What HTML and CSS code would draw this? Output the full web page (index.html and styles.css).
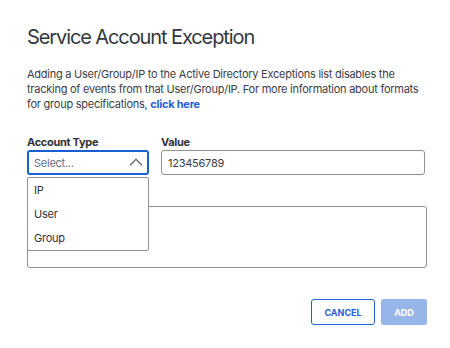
FILE: index.html
```html
<!DOCTYPE html>
<html lang="en">
<head>
  <meta charset="UTF-8">
  <title>Service Account Exception</title>
  <link rel="stylesheet" href="styles.css">
</head>
<body>
  <div class="dialog">
    <h2 class="title">Service Account Exception</h2>
    <p class="intro">
      Adding a User/Group/IP to the Active Directory Exceptions list disables the
      tracking of events from that User/Group/IP. For more information about formats
      for group specifications, <a href="#">click here</a>
    </p>

    <div class="row">
      <div class="field type-field">
        <label>Account Type</label>
        <div class="select">
          <span class="placeholder">Select...</span>
          <svg class="chevron" width="14" height="8" viewBox="0 0 14 8">
            <path d="M1 7.2 L7 1.3 L13 7.2" fill="none" stroke="#5a5f66" stroke-width="1.2"/>
          </svg>
        </div>
        <ul class="menu">
          <li>IP</li>
          <li>User</li>
          <li>Group</li>
        </ul>
      </div>
      <div class="field value-field">
        <label>Value</label>
        <input class="input" type="text" value="123456789">
      </div>
    </div>

    <div class="comment-field">
      <textarea class="textarea" aria-label="Comment"></textarea>
    </div>

    <div class="actions">
      <button class="btn btn-outline">Cancel</button>
      <button class="btn btn-primary" disabled>Add</button>
    </div>
  </div>
</body>
</html>
```

FILE: styles.css
```css
body {
  margin: 0;
  font-family: 'Inter', 'Liberation Sans', sans-serif;
  background-color: #ffffff;
  color: #3a3e44;
}
.dialog {
  width: 400px;
  padding: 25px 23px 0 27px;
}
.title {
  margin: 0;
  font-size: 20px;
  line-height: 24px;
  font-weight: 400;
  letter-spacing: -1.1px;
  color: #33383e;
}
.intro {
  margin: 18px 0 0;
  font-size: 11px;
  line-height: 15px;
  letter-spacing: -0.25px;
  color: #3b4046;
}
.intro a {
  color: #1f63d6;
  font-weight: 700;
  text-decoration: none;
}
.row {
  display: flex;
  gap: 12px;
  margin-top: 23px;
}
.field {
  display: flex;
  flex-direction: column;
}
.field label {
  font-size: 11px;
  line-height: 14px;
  font-weight: 700;
  letter-spacing: -0.3px;
  color: #2f3338;
  margin-bottom: 1px;
}
.type-field {
  position: relative;
  width: 122px;
}
.value-field {
  width: 264px;
}
.select {
  box-sizing: border-box;
  height: 25px;
  border: 2px solid #1a5fd0;
  border-radius: 3px;
  display: flex;
  align-items: center;
  justify-content: space-between;
  padding: 0 4px 0 5px;
}
.placeholder {
  font-size: 11px;
  letter-spacing: -0.25px;
  color: #6b7078;
}
.chevron {
  display: block;
  margin-bottom: 1px;
}
.input {
  box-sizing: border-box;
  height: 25px;
  margin: 0;
  border: 1px solid #8b9097;
  border-radius: 3px;
  padding: 0 6px;
  font-family: inherit;
  font-size: 11px;
  letter-spacing: -0.25px;
  color: #3a3e44;
  outline: none;
}
.menu {
  position: absolute;
  top: 42px;
  left: 0;
  width: 122px;
  box-sizing: border-box;
  margin: 0;
  padding: 0;
  list-style: none;
  background-color: #ffffff;
  border: 1px solid #8b9097;
  border-radius: 2px;
  z-index: 2;
}
.menu li {
  height: 24px;
  line-height: 24px;
  padding-left: 6px;
  font-size: 11px;
  letter-spacing: -0.25px;
  color: #2f3338;
}
.comment-field {
  display: flex;
  margin-top: 31px;
  width: 400px;
}
.textarea {
  box-sizing: border-box;
  width: 100%;
  height: 62px;
  margin: 0;
  border: 1px solid #8b9097;
  border-radius: 3px;
  resize: none;
  font-family: inherit;
}
.actions {
  display: flex;
  justify-content: flex-end;
  gap: 6px;
  margin-top: 31px;
}
.btn {
  box-sizing: border-box;
  height: 26px;
  border-radius: 3px;
  font-family: inherit;
  font-size: 9px;
  font-weight: 700;
  text-transform: uppercase;
  cursor: pointer;
}
.btn-outline {
  width: 64px;
  background-color: #ffffff;
  color: #1f63d6;
  border: 1px solid #1f63d6;
}
.btn-primary {
  width: 46px;
  background-color: #97b5e8;
  color: #ffffff;
  border: none;
}
```
